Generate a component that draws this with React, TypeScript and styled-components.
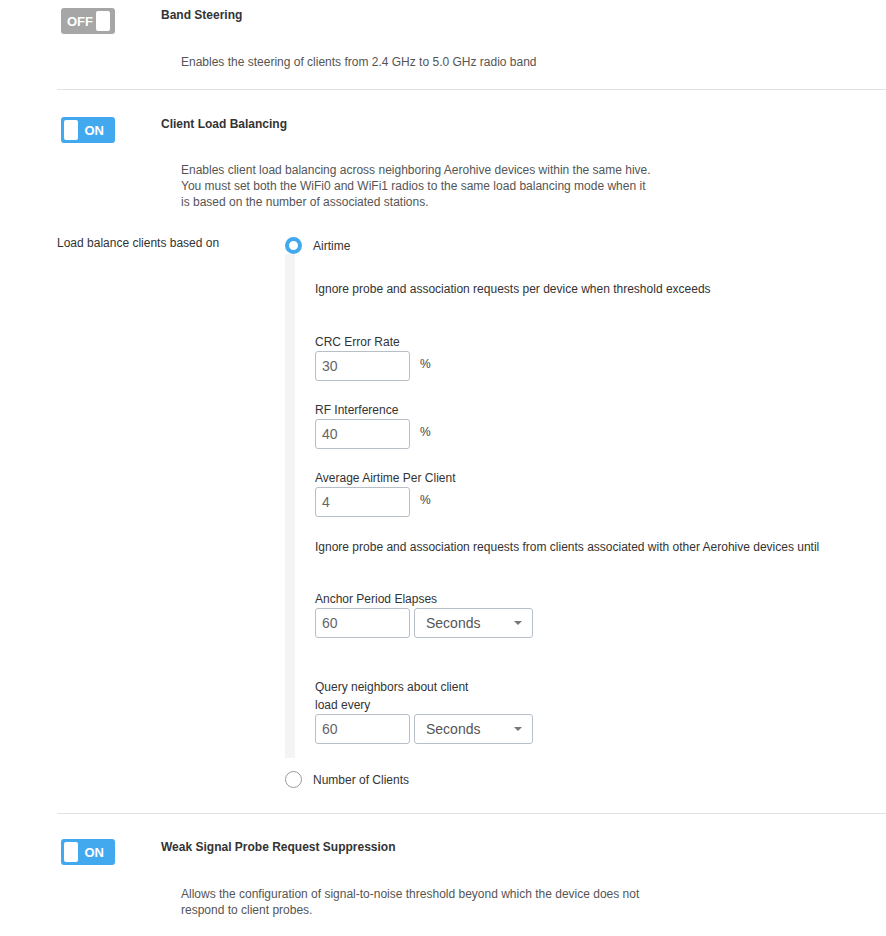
import React from "react";
import styled, { createGlobalStyle } from "styled-components";

const Global = createGlobalStyle`
  html, body { margin: 0; padding: 0; background: #fff; }
  body { font-family: "Liberation Sans", Arial, sans-serif; font-size: 12px; color: #333; }
  * { box-sizing: border-box; }
`;

const Page = styled.div`
  padding-left: 57px;
  width: 886px;
`;

const Section = styled.section<{ $top: number }>`
  padding-top: ${(p) => p.$top}px;
`;

const Header = styled.div`
  display: flex;
  align-items: flex-start;
  padding-left: 4px;
`;

const Toggle = styled.div<{ $on: boolean }>`
  width: 54px;
  height: 26px;
  border-radius: 3px;
  background: ${(p) => (p.$on ? "#43a9ef" : "#a6a6a6")};
  display: flex;
  flex-direction: ${(p) => (p.$on ? "row" : "row-reverse")};
  align-items: center;
  justify-content: space-between;
  padding: 0 ${(p) => (p.$on ? "11px 0 3px" : "5px 0 6px")};
  color: #fff;
  font-weight: bold;
  font-size: 13px;
  flex-shrink: 0;
`;

const Knob = styled.span`
  width: 14px;
  height: 20px;
  background: #fff;
  border-radius: 2px;
`;

const Title = styled.div<{ $top?: number }>`
  margin-left: 46px;
  margin-top: ${(p) => p.$top ?? 0}px;
  font-weight: bold;
  font-size: 12px;
  line-height: 14px;
  color: #333;
`;

const Desc = styled.p<{ $top: number }>`
  margin: ${(p) => p.$top}px 0 0 124px;
  width: 476px;
  font-size: 12px;
  line-height: 16px;
  color: #555;
`;

const Divider = styled.hr<{ $top: number }>`
  margin: ${(p) => p.$top}px 0 0 0;
  border: 0;
  border-top: 1px solid #e2e2e2;
  height: 0;
`;

const OptionRow = styled.div`
  display: flex;
  margin-top: 26px;
`;

const RowLabel = styled.div`
  width: 228px;
  line-height: 14px;
  color: #333;
`;

const RadioGroup = styled.div`
  display: flex;
  flex-direction: column;
  margin-top: 1px;
`;

const RadioLine = styled.label`
  display: flex;
  align-items: center;
  gap: 11px;
  color: #333;
  line-height: 16px;
`;

const RadioDot = styled.span<{ $checked: boolean }>`
  width: 17px;
  height: 17px;
  border-radius: 50%;
  border: ${(p) => (p.$checked ? "4px solid #43a9ef" : "1px solid #9a9a9a")};
  background: #fff;
  flex-shrink: 0;
`;

const SubPanel = styled.div`
  border-left: 10px solid #f4f4f4;
  padding: 28px 0 14px 20px;
  margin-bottom: 13px;
`;

const Note = styled.div<{ $gapAfter: number }>`
  line-height: 14px;
  color: #333;
  margin-bottom: ${(p) => p.$gapAfter}px;
`;

const Field = styled.div<{ $gapAfter: number }>`
  margin-bottom: ${(p) => p.$gapAfter}px;
`;

const FieldLabel = styled.div`
  line-height: 18px;
  max-width: 170px;
  color: #333;
`;

const Controls = styled.div`
  display: flex;
  align-items: center;
  gap: 4px;
`;

const TextInput = styled.div`
  width: 95px;
  height: 30px;
  border: 1px solid #b6bfc8;
  border-radius: 3px;
  padding-left: 6px;
  display: flex;
  align-items: center;
  font-size: 14px;
  color: #666;
`;

const Unit = styled.span`
  margin-left: 6px;
  margin-top: -4px;
  font-size: 12px;
  color: #444;
`;

const Select = styled.div`
  width: 119px;
  height: 30px;
  border: 1px solid #b6bfc8;
  border-radius: 3px;
  padding: 0 10px 0 11px;
  display: flex;
  align-items: center;
  justify-content: space-between;
  font-size: 14px;
  color: #555;
`;

const Caret = styled.span`
  width: 0;
  height: 0;
  border-left: 4px solid transparent;
  border-right: 4px solid transparent;
  border-top: 4px solid #777;
`;

export default function App() {
  return (
    <>
      <Global />
      <Page>
        <Section $top={8}>
          <Header>
            <Toggle $on={false}>
              <Knob />
              <span>OFF</span>
            </Toggle>
            <Title>Band Steering</Title>
          </Header>
          <Desc $top={20}>Enables the steering of clients from 2.4 GHz to 5.0 GHz radio band</Desc>
          <Divider $top={19} />
        </Section>

        <Section $top={27}>
          <Header>
            <Toggle $on={true}>
              <Knob />
              <span>ON</span>
            </Toggle>
            <Title>Client Load Balancing</Title>
          </Header>
          <Desc $top={19}>
            Enables client load balancing across neighboring Aerohive devices within the same hive.
            You must set both the WiFi0 and WiFi1 radios to the same load balancing mode when it is
            based on the number of associated stations.
          </Desc>
          <OptionRow>
            <RowLabel>Load balance clients based on</RowLabel>
            <RadioGroup>
              <RadioLine>
                <RadioDot $checked={true} />
                Airtime
              </RadioLine>
              <SubPanel>
                <Note $gapAfter={37}>
                  Ignore probe and association requests per device when threshold exceeds
                </Note>
                <Field $gapAfter={20}>
                  <FieldLabel>CRC Error Rate</FieldLabel>
                  <Controls>
                    <TextInput>30</TextInput>
                    <Unit>%</Unit>
                  </Controls>
                </Field>
                <Field $gapAfter={20}>
                  <FieldLabel>RF Interference</FieldLabel>
                  <Controls>
                    <TextInput>40</TextInput>
                    <Unit>%</Unit>
                  </Controls>
                </Field>
                <Field $gapAfter={23}>
                  <FieldLabel>Average Airtime Per Client</FieldLabel>
                  <Controls>
                    <TextInput>4</TextInput>
                    <Unit>%</Unit>
                  </Controls>
                </Field>
                <Note $gapAfter={36}>
                  Ignore probe and association requests from clients associated with other Aerohive devices until
                </Note>
                <Field $gapAfter={40}>
                  <FieldLabel>Anchor Period Elapses</FieldLabel>
                  <Controls>
                    <TextInput>60</TextInput>
                    <Select>
                      Seconds
                      <Caret />
                    </Select>
                  </Controls>
                </Field>
                <Field $gapAfter={0}>
                  <FieldLabel>Query neighbors about client load every</FieldLabel>
                  <Controls>
                    <TextInput>60</TextInput>
                    <Select>
                      Seconds
                      <Caret />
                    </Select>
                  </Controls>
                </Field>
              </SubPanel>
              <RadioLine>
                <RadioDot $checked={false} />
                Number of Clients
              </RadioLine>
            </RadioGroup>
          </OptionRow>
          <Divider $top={25} />
        </Section>

        <Section $top={25}>
          <Header>
            <Toggle $on={true}>
              <Knob />
              <span>ON</span>
            </Toggle>
            <Title $top={1}>Weak Signal Probe Request Suppression</Title>
          </Header>
          <Desc $top={21}>
            Allows the configuration of signal-to-noise threshold beyond which the device does not
            respond to client probes.
          </Desc>
        </Section>
      </Page>
    </>
  );
}
